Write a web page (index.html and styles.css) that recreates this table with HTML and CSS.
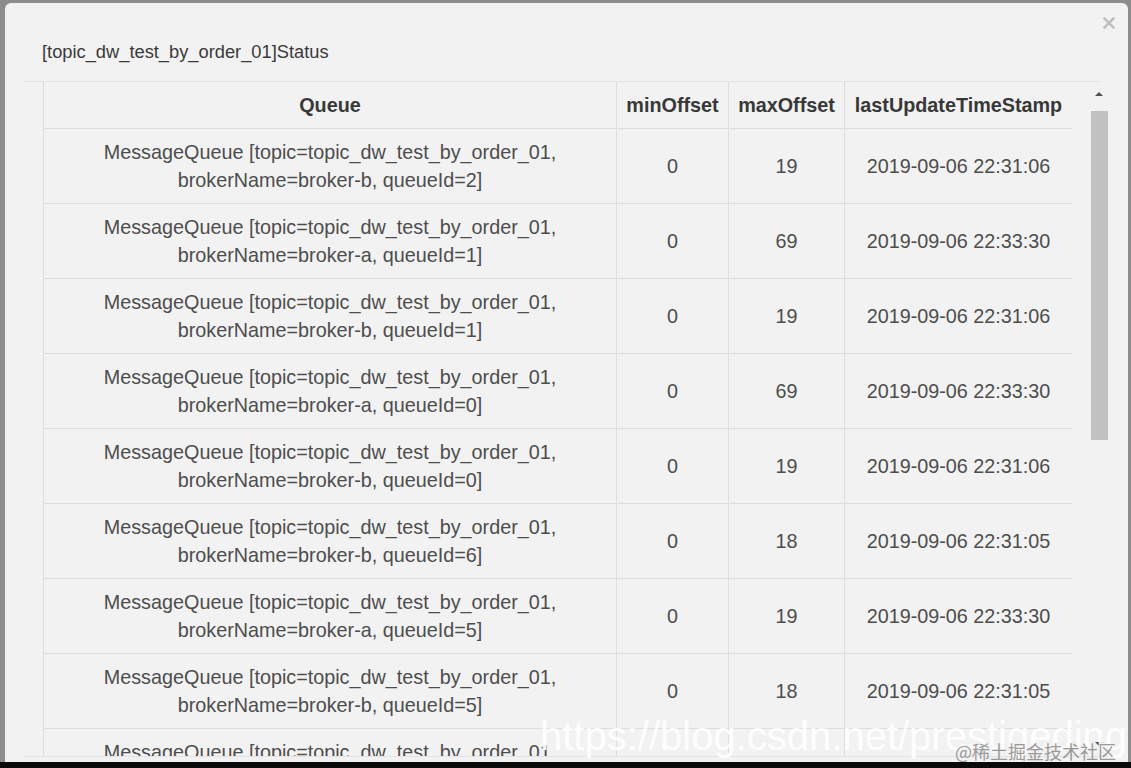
FILE: index.html
```html
<!DOCTYPE html>
<html>
<head>
<meta charset="utf-8">
<link rel="stylesheet" href="styles.css">
</head>
<body>
<div class="screen">
  <div class="backdrop">
    <div class="modal">
      <div class="modal-header">
        <h4 class="modal-title">[topic_dw_test_by_order_01]Status</h4>
        <button class="close" aria-label="Close">
          <svg width="12" height="12" viewBox="0 0 12 12"><path d="M1.5 1.5 L10.5 10.5 M10.5 1.5 L1.5 10.5" stroke="#bdbdbd" stroke-width="2.4" stroke-linecap="square"/></svg>
        </button>
      </div>
      <div class="modal-body">
        <div class="scroll-content">
          <table class="status-table">
            <colgroup>
              <col class="c-queue"><col class="c-min"><col class="c-max"><col class="c-time">
            </colgroup>
            <thead>
              <tr><th>Queue</th><th>minOffset</th><th>maxOffset</th><th>lastUpdateTimeStamp</th></tr>
            </thead>
            <tbody>
              <tr><td>MessageQueue [topic=topic_dw_test_by_order_01,<br>brokerName=broker-b, queueId=2]</td><td>0</td><td>19</td><td>2019-09-06 22:31:06</td></tr>
              <tr><td>MessageQueue [topic=topic_dw_test_by_order_01,<br>brokerName=broker-a, queueId=1]</td><td>0</td><td>69</td><td>2019-09-06 22:33:30</td></tr>
              <tr><td>MessageQueue [topic=topic_dw_test_by_order_01,<br>brokerName=broker-b, queueId=1]</td><td>0</td><td>19</td><td>2019-09-06 22:31:06</td></tr>
              <tr><td>MessageQueue [topic=topic_dw_test_by_order_01,<br>brokerName=broker-a, queueId=0]</td><td>0</td><td>69</td><td>2019-09-06 22:33:30</td></tr>
              <tr><td>MessageQueue [topic=topic_dw_test_by_order_01,<br>brokerName=broker-b, queueId=0]</td><td>0</td><td>19</td><td>2019-09-06 22:31:06</td></tr>
              <tr><td>MessageQueue [topic=topic_dw_test_by_order_01,<br>brokerName=broker-b, queueId=6]</td><td>0</td><td>18</td><td>2019-09-06 22:31:05</td></tr>
              <tr><td>MessageQueue [topic=topic_dw_test_by_order_01,<br>brokerName=broker-a, queueId=5]</td><td>0</td><td>19</td><td>2019-09-06 22:33:30</td></tr>
              <tr><td>MessageQueue [topic=topic_dw_test_by_order_01,<br>brokerName=broker-b, queueId=5]</td><td>0</td><td>18</td><td>2019-09-06 22:31:05</td></tr>
              <tr><td>MessageQueue [topic=topic_dw_test_by_order_01,<br>brokerName=broker-a, queueId=4]</td><td>0</td><td>69</td><td>2019-09-06 22:33:30</td></tr>
            </tbody>
          </table>
        </div>
        <div class="scrollbar">
          <span class="arrow arrow-up"></span>
          <span class="thumb"></span>
          <span class="arrow arrow-down"></span>
        </div>
      </div>
    </div>
    <div class="watermark">
      <span class="wm-url">https://blog.csdn.net/prestigeding</span>
      <span class="wm-site">@稀土掘金技术社区</span>
    </div>
  </div>
  <div class="bottom-bar"></div>
</div>
</body>
</html>
```

FILE: styles.css
```css
html, body {
  margin: 0;
  padding: 0;
  height: 100%;
  overflow: hidden;
}
body {
  background: #000;
  font-family: "Liberation Sans", Arial, sans-serif;
}
.screen {
  display: flex;
  flex-direction: column;
  height: 768px;
}
.backdrop {
  position: relative;
  height: 762px;
  overflow: hidden;
  background: #8d8d8d;
  padding: 3px 3px 0 5px;
  box-sizing: border-box;
}
.bottom-bar {
  height: 6px;
  background: #0a0a0a;
}
.modal {
  position: relative;
  width: 1123px;
  height: 800px;
  background: #f2f2f2;
  border-radius: 6px 6px 0 0;
}
.modal-header {
  margin: 0 28px 0 19px;
  padding: 38px 0 18px 18px;
  border-bottom: 1px solid #e3e3e3;
}
.modal-title {
  margin: 0;
  font-size: 18.3px;
  font-weight: normal;
  line-height: 22px;
  color: #3a3a3a;
}
.close {
  position: absolute;
  top: 13px;
  right: 12px;
  width: 14px;
  height: 14px;
  padding: 0;
  border: 0;
  background: transparent;
  display: flex;
  align-items: center;
  justify-content: center;
}
.modal-body {
  display: flex;
  height: 674px;
  margin: 0 20px 0 19px;
  border-bottom: 1px solid #e3e3e3;
}
.scroll-content {
  flex: 1;
  overflow: hidden;
  padding-left: 19px;
}
.status-table {
  border-collapse: collapse;
  table-layout: fixed;
  width: 1029px;
  color: #4d4d4d;
  font-size: 19.8px;
  line-height: 28px;
}
.c-queue { width: 573px; }
.c-min { width: 112px; }
.c-max { width: 116px; }
.c-time { width: 228px; }
.status-table th,
.status-table td {
  border: 1px solid #dedede;
  padding: 9px 2px;
  text-align: center;
  vertical-align: middle;
  white-space: nowrap;
}
.status-table th {
  border-top: 0;
  font-weight: bold;
  color: #383838;
}
.scrollbar {
  position: relative;
  width: 17px;
  margin-left: 19px;
}
.arrow {
  position: absolute;
  left: 4px;
  width: 0;
  height: 0;
  border-left: 4px solid transparent;
  border-right: 4px solid transparent;
}
.arrow-up {
  top: 10px;
  border-bottom: 4px solid #505050;
}
.arrow-down {
  top: 660px;
  border-top: 4px solid #505050;
}
.thumb {
  position: absolute;
  top: 29px;
  left: 0;
  width: 17px;
  height: 329px;
  background: #c1c1c1;
}
.watermark {
  position: absolute;
  left: 540px;
  top: 712px;
  width: 590px;
  height: 50px;
}
.wm-url {
  position: absolute;
  left: 0;
  top: 0;
  font-family: "Liberation Sans", Arial, sans-serif;
  font-size: 40px;
  line-height: 48px;
  color: rgba(255, 255, 255, 0.92);
  white-space: nowrap;
}
.wm-site {
  position: absolute;
  right: 14px;
  top: 28px;
  font-family: "Noto Sans CJK SC", sans-serif;
  font-size: 18px;
  line-height: 22px;
  color: #9a9a9a;
  white-space: nowrap;
}
```
